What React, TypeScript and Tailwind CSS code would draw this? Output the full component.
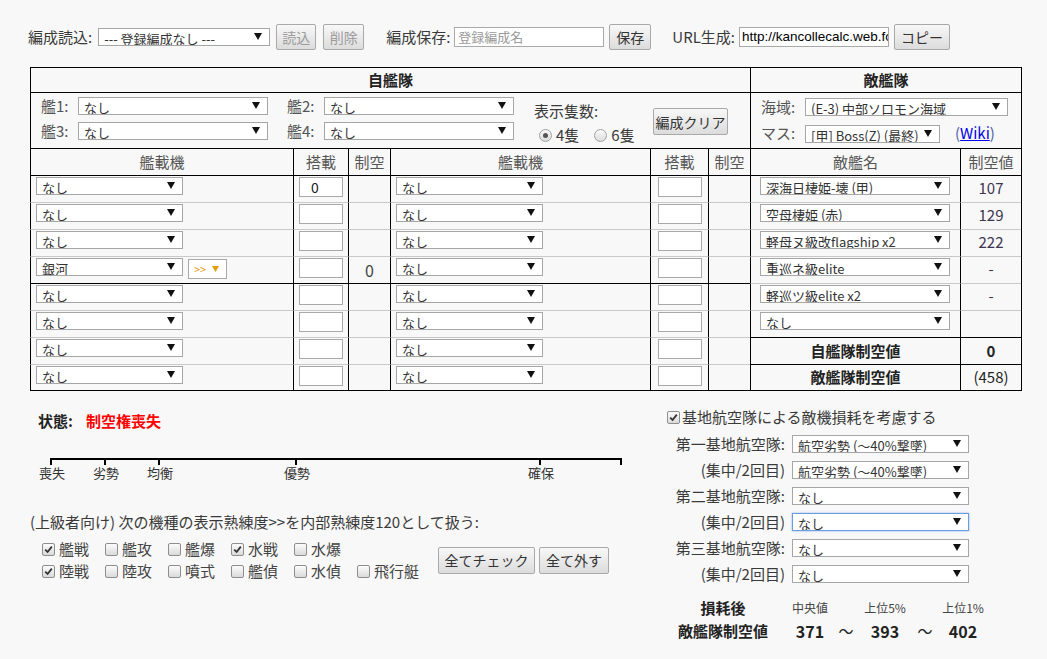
import React from "react";

function Arrow({ color = "#111" }: { color?: string }) {
  return (
    <svg width="8" height="7" viewBox="0 0 8 7" className="absolute right-[7px] top-[4px]">
      <path d="M0 0H8L4 7Z" fill={color} />
    </svg>
  );
}

function Sel({ text, className = "", focus = false }: { text: string; className?: string; focus?: boolean }) {
  return (
    <div
      className={`relative h-[18px] shrink-0 overflow-hidden bg-white ${
        focus ? "border border-[#6d9be0] shadow-[0_0_2px_#8ab4f0]" : "border border-[#a6a6a6]"
      } ${className}`}
    >
      <div className="whitespace-nowrap pl-[5px] pt-[2px] text-[13px] leading-[16px] text-[#333]">{text}</div>
      <Arrow />
    </div>
  );
}

function Btn({
  children,
  className = "",
  disabled = false,
}: {
  children: React.ReactNode;
  className?: string;
  disabled?: boolean;
}) {
  return (
    <button
      type="button"
      className={`flex shrink-0 items-center justify-center whitespace-nowrap rounded-[2px] border border-[#a9a9a9] bg-linear-to-b from-[#f8f8f8] to-[#dcdcdc] text-[14px] leading-none ${
        disabled ? "text-[#9c9c9c]" : "text-[#333]"
      } ${className}`}
    >
      {children}
    </button>
  );
}

function Check({ checked = false }: { checked?: boolean }) {
  return (
    <span className="inline-flex h-[13px] w-[13px] shrink-0 items-center justify-center rounded-[2px] border border-[#8e8e8e] bg-linear-to-b from-[#fcfcfc] to-[#dadada]">
      {checked && (
        <svg width="9" height="9" viewBox="0 0 9 9">
          <path d="M1.2 4.6L3.6 7L7.8 1.6" stroke="#333" strokeWidth="1.8" fill="none" />
        </svg>
      )}
    </span>
  );
}

function Radio({ checked = false }: { checked?: boolean }) {
  return (
    <span className="inline-flex h-[13px] w-[13px] shrink-0 items-center justify-center rounded-full border border-[#a0a0a0] bg-linear-to-b from-[#fafafa] to-[#dcdcdc]">
      {checked && <span className="h-[5px] w-[5px] rounded-full bg-[#555]" />}
    </span>
  );
}

function Box({ value }: { value?: string }) {
  return (
    <div className="h-[20px] w-[44px] border border-[#a9a9a9] bg-white pl-[11px] text-[14px] leading-[18px] text-[#222]">
      {value}
    </div>
  );
}

const left = ["なし", "なし", "なし", "銀河", "なし", "なし", "なし", "なし"];

const enemies: [string, string][] = [
  ["深海日棲姫-壊 (甲)", "107"],
  ["空母棲姫 (赤)", "129"],
  ["軽母ヌ級改flagship x2", "222"],
  ["重巡ネ級elite", "-"],
  ["軽巡ツ級elite x2", "-"],
  ["なし", ""],
];

const base = [
  ["第一基地航空隊:", "航空劣勢 (〜40%撃墜)"],
  ["(集中/2回目)", "航空劣勢 (〜40%撃墜)"],
  ["第二基地航空隊:", "なし"],
  ["(集中/2回目)", "なし"],
  ["第三基地航空隊:", "なし"],
  ["(集中/2回目)", "なし"],
];

const gauge: [number, string][] = [
  [50, "喪失"],
  [104, "劣勢"],
  [158, "均衡"],
  [295, "優勢"],
  [539, "確保"],
  [620, ""],
];

const row1: [string, boolean][] = [
  ["艦戦", true],
  ["艦攻", false],
  ["艦爆", false],
  ["水戦", true],
  ["水爆", false],
];
const row2: [string, boolean][] = [
  ["陸戦", true],
  ["陸攻", false],
  ["噴式", false],
  ["艦偵", false],
  ["水偵", false],
  ["飛行艇", false],
];

export default function App() {
  return (
    <div className="h-[659px] w-[1047px] overflow-hidden bg-[#f8f8f8] font-['Noto_Sans_CJK_JP','Noto_Sans',sans-serif] text-[15px] text-[#3a3a3a]">
      {/* top bar */}
      <div className="mt-[24px] flex h-[26px] items-center whitespace-nowrap pl-[28px]">
        <span>編成読込:</span>
        <Sel className="ml-[6px] w-[172px]" text="--- 登録編成なし ---" />
        <Btn disabled className="ml-[6px] h-[26px] w-[40px]">
          読込
        </Btn>
        <Btn disabled className="ml-[7px] h-[26px] w-[41px]">
          削除
        </Btn>
        <span className="ml-[22px]">編成保存:</span>
        <div className="ml-[4px] h-[20px] w-[150px] shrink-0 border border-[#a9a9a9] bg-white pl-[3px] text-[13px] leading-[18px] text-[#9a9a9a]">
          登録編成名
        </div>
        <Btn className="ml-[5px] h-[26px] w-[42px]">保存</Btn>
        <span className="ml-[21px]">URL生成:</span>
        <div className="ml-[4px] h-[20px] w-[150px] shrink-0 overflow-hidden whitespace-nowrap border border-[#a9a9a9] bg-white pl-[2px] font-['Liberation_Sans',sans-serif] text-[13.5px] leading-[18px] text-black">
          http://kancollecalc.web.fc
        </div>
        <Btn className="ml-[5px] h-[26px] w-[56px]">コピー</Btn>
      </div>

      {/* main table */}
      <div className="ml-[30px] mt-[17px] grid w-[992px] grid-cols-[263px_55px_42px_260px_58px_42px_210px_61px] grid-rows-[25px_56px_27px_27px_27px_27px_27px_27px_27px_27px_26px] border-b border-r border-black">
        <div className="col-span-6 flex items-center justify-center border-l border-t border-black font-bold text-[#222]">
          自艦隊
        </div>
        <div className="col-span-2 flex items-center justify-center border-l border-t border-black font-bold text-[#222]">
          敵艦隊
        </div>

        {/* ship selects */}
        <div className="col-span-6 flex whitespace-nowrap border-l border-t border-black pl-[10px] pt-[4px]">
          <div className="flex shrink-0 flex-col gap-[7px]">
            <div className="flex h-[18px] items-center">
              <span className="w-[37px] text-[#555]">艦1:</span>
              <Sel className="w-[190px]" text="なし" />
            </div>
            <div className="flex h-[18px] items-center">
              <span className="w-[37px] text-[#555]">艦3:</span>
              <Sel className="w-[190px]" text="なし" />
            </div>
          </div>
          <div className="ml-[19px] flex shrink-0 flex-col gap-[7px]">
            <div className="flex h-[18px] items-center">
              <span className="w-[37px] text-[#555]">艦2:</span>
              <Sel className="w-[190px]" text="なし" />
            </div>
            <div className="flex h-[18px] items-center">
              <span className="w-[37px] text-[#555]">艦4:</span>
              <Sel className="w-[190px]" text="なし" />
            </div>
          </div>
          <div className="ml-[20px] w-[99px] shrink-0 pt-[4px]">
            <div className="leading-[20px]">表示隻数:</div>
            <div className="mt-[4px] flex items-center pl-[5px] leading-[20px]">
              <Radio checked />
              <span className="ml-[4px]">4隻</span>
              <span className="ml-[15px] flex">
                <Radio />
              </span>
              <span className="ml-[4px]">6隻</span>
            </div>
          </div>
          <Btn className="ml-[20px] mt-[11px] h-[27px] w-[75px] text-[13px]">編成クリア</Btn>
        </div>
        <div className="col-span-2 flex flex-col gap-[8px] whitespace-nowrap border-l border-t border-black pl-[10px] pt-[5px]">
          <div className="flex h-[18px] items-center">
            <span className="w-[44px] text-[#555]">海域:</span>
            <Sel className="w-[203px]" text="(E-3) 中部ソロモン海域" />
          </div>
          <div className="flex h-[19px] items-center">
            <span className="w-[44px] text-[#555]">マス:</span>
            <Sel className="w-[135px]" text="[甲] Boss(Z) (最終)" />
            <span className="ml-[15px] text-[#4a5fa8]">
              (<span className="text-[#0000ee] underline">Wiki</span>)
            </span>
          </div>
        </div>

        {/* column headers */}
        {["艦載機", "搭載", "制空", "艦載機", "搭載", "制空", "敵艦名", "制空値"].map((h, k) => (
          <div key={k} className="flex items-center justify-center border-l border-t border-black text-[#555]">
            {h}
          </div>
        ))}

        {/* slot rows */}
        {left.map((l, i) => {
          const ownTop = i === 0 || i === 4 ? "border-t-black" : "border-t-[#c9c9c9]";
          const enTop = i === 0 || i === 6 || i === 7 ? "border-t-black" : "border-t-[#c9c9c9]";
          const own = `border-l border-t border-l-black ${ownTop}`;
          const en = `border-l border-t border-l-black ${enTop}`;
          return (
            <React.Fragment key={i}>
              <div className={`${own} flex items-start gap-[5px] pl-[5px] pt-[1px]`}>
                <Sel className="w-[147px]" text={l} />
                {i === 3 && (
                  <div className="relative mt-[1px] h-[20px] w-[39px] border border-[#a9a9a9] bg-white">
                    <span className="absolute left-[5px] top-[2px] text-[11px] leading-[14px] text-[#e39d12]">&gt;&gt;</span>
                    <svg width="7" height="6" viewBox="0 0 7 6" className="absolute right-[7px] top-[6px]">
                      <path d="M0 0H7L3.5 6Z" fill="#e39d12" />
                    </svg>
                  </div>
                )}
              </div>
              <div className={`${own} flex justify-center pt-[1px]`}>
                <Box value={i === 0 ? "0" : undefined} />
              </div>
              <div className={`${own} flex items-center justify-center text-[16px] text-[#444]`}>{i === 3 ? "0" : ""}</div>
              <div className={`${own} flex items-start pl-[5px] pt-[1px]`}>
                <Sel className="w-[147px]" text="なし" />
              </div>
              <div className={`${own} flex justify-center pt-[1px]`}>
                <Box />
              </div>
              <div className={own} />
              {i < 6 ? (
                <>
                  <div className={`${en} flex items-start pl-[9px] pt-[1px]`}>
                    <Sel className="w-[190px]" text={enemies[i][0]} />
                  </div>
                  <div className={`${en} pt-[1px] text-center leading-[21px] text-[#3d3550]`}>{enemies[i][1]}</div>
                </>
              ) : (
                <>
                  <div className={`${en} flex items-center justify-center font-bold text-[#222]`}>
                    {i === 6 ? "自艦隊制空値" : "敵艦隊制空値"}
                  </div>
                  <div className={`${en} flex items-center justify-center text-[#222] ${i === 6 ? "font-bold" : ""}`}>
                    {i === 6 ? "0" : "(458)"}
                  </div>
                </>
              )}
            </React.Fragment>
          );
        })}
      </div>

      {/* bottom */}
      <div className="flex">
        <div className="w-[667px] shrink-0">
          <div className="mt-[20px] flex h-[20px] items-center pl-[38px] font-bold text-[#222]">
            <span>状態:</span>
            <span className="ml-[13px] text-[#ff0000]">制空権喪失</span>
          </div>

          <div className="relative mt-[25px] h-[30px]">
            <div className="absolute left-[50px] top-[2px] h-[2px] w-[572px] bg-black" />
            {gauge.map(([x, t]) => (
              <React.Fragment key={x}>
                <div className="absolute top-[2px] h-[7px] w-[2px] bg-black" style={{ left: x }} />
                {t && (
                  <span
                    className="absolute top-[9px] -translate-x-1/2 text-[13px] leading-[16px] text-[#333]"
                    style={{ left: x + 2 }}
                  >
                    {t}
                  </span>
                )}
              </React.Fragment>
            ))}
          </div>

          <div className="mt-[26px] h-[20px] pl-[30px] leading-[20px]">
            (上級者向け) 次の機種の表示熟練度&gt;&gt;を内部熟練度120として扱う:
          </div>

          <div className="mt-[6px] flex items-center pl-[42px]">
            <div className="flex flex-col">
              <div className="flex h-[22px] items-center">
                {row1.map(([t, c]) => (
                  <div key={t} className="flex w-[63px] items-center">
                    <Check checked={c} />
                    <span className="ml-[4px] text-[#444]">{t}</span>
                  </div>
                ))}
              </div>
              <div className="flex h-[22px] items-center">
                {row2.map(([t, c]) => (
                  <div key={t} className="flex w-[63px] items-center">
                    <Check checked={c} />
                    <span className="ml-[4px] text-[#444]">{t}</span>
                  </div>
                ))}
              </div>
            </div>
            <Btn className="ml-[18px] h-[27px] w-[97px]">全てチェック</Btn>
            <Btn className="ml-[4px] h-[27px] w-[70px]">全て外す</Btn>
          </div>
        </div>

        <div className="flex-1">
          <div className="mt-[16px] flex h-[20px] items-center">
            <Check checked />
            <span className="ml-[2px]">基地航空隊による敵機損耗を考慮する</span>
          </div>
          <div className="mt-[4px]">
            {base.map(([l, v], k) => (
              <div key={k} className="flex h-[26px] items-center">
                <span className="w-[118px] text-right">{l}</span>
                <Sel className="ml-[7px] w-[177px]" text={v} focus={k === 3} />
              </div>
            ))}
          </div>

          <div className="mt-[11px] flex h-[20px] items-center pl-[3px]">
            <span className="w-[106px] text-center font-bold text-[#222]">損耗後</span>
            <span className="ml-[14px] w-[40px] text-center text-[12px] text-[#444]">中央値</span>
            <span className="w-[32px]" />
            <span className="w-[46px] text-center text-[12px] text-[#444]">上位5%</span>
            <span className="w-[34px]" />
            <span className="w-[42px] text-center text-[12px] text-[#444]">上位1%</span>
          </div>
          <div className="mt-[2px] flex h-[22px] items-center pl-[3px] text-[#222]">
            <span className="w-[106px] text-center font-bold">敵艦隊制空値</span>
            <span className="ml-[14px] w-[40px] text-center text-[16px] font-bold">371</span>
            <span className="w-[32px] text-center">〜</span>
            <span className="w-[46px] text-center text-[16px] font-bold">393</span>
            <span className="w-[34px] text-center">〜</span>
            <span className="w-[42px] text-center text-[16px] font-bold">402</span>
          </div>
        </div>
      </div>
    </div>
  );
}
